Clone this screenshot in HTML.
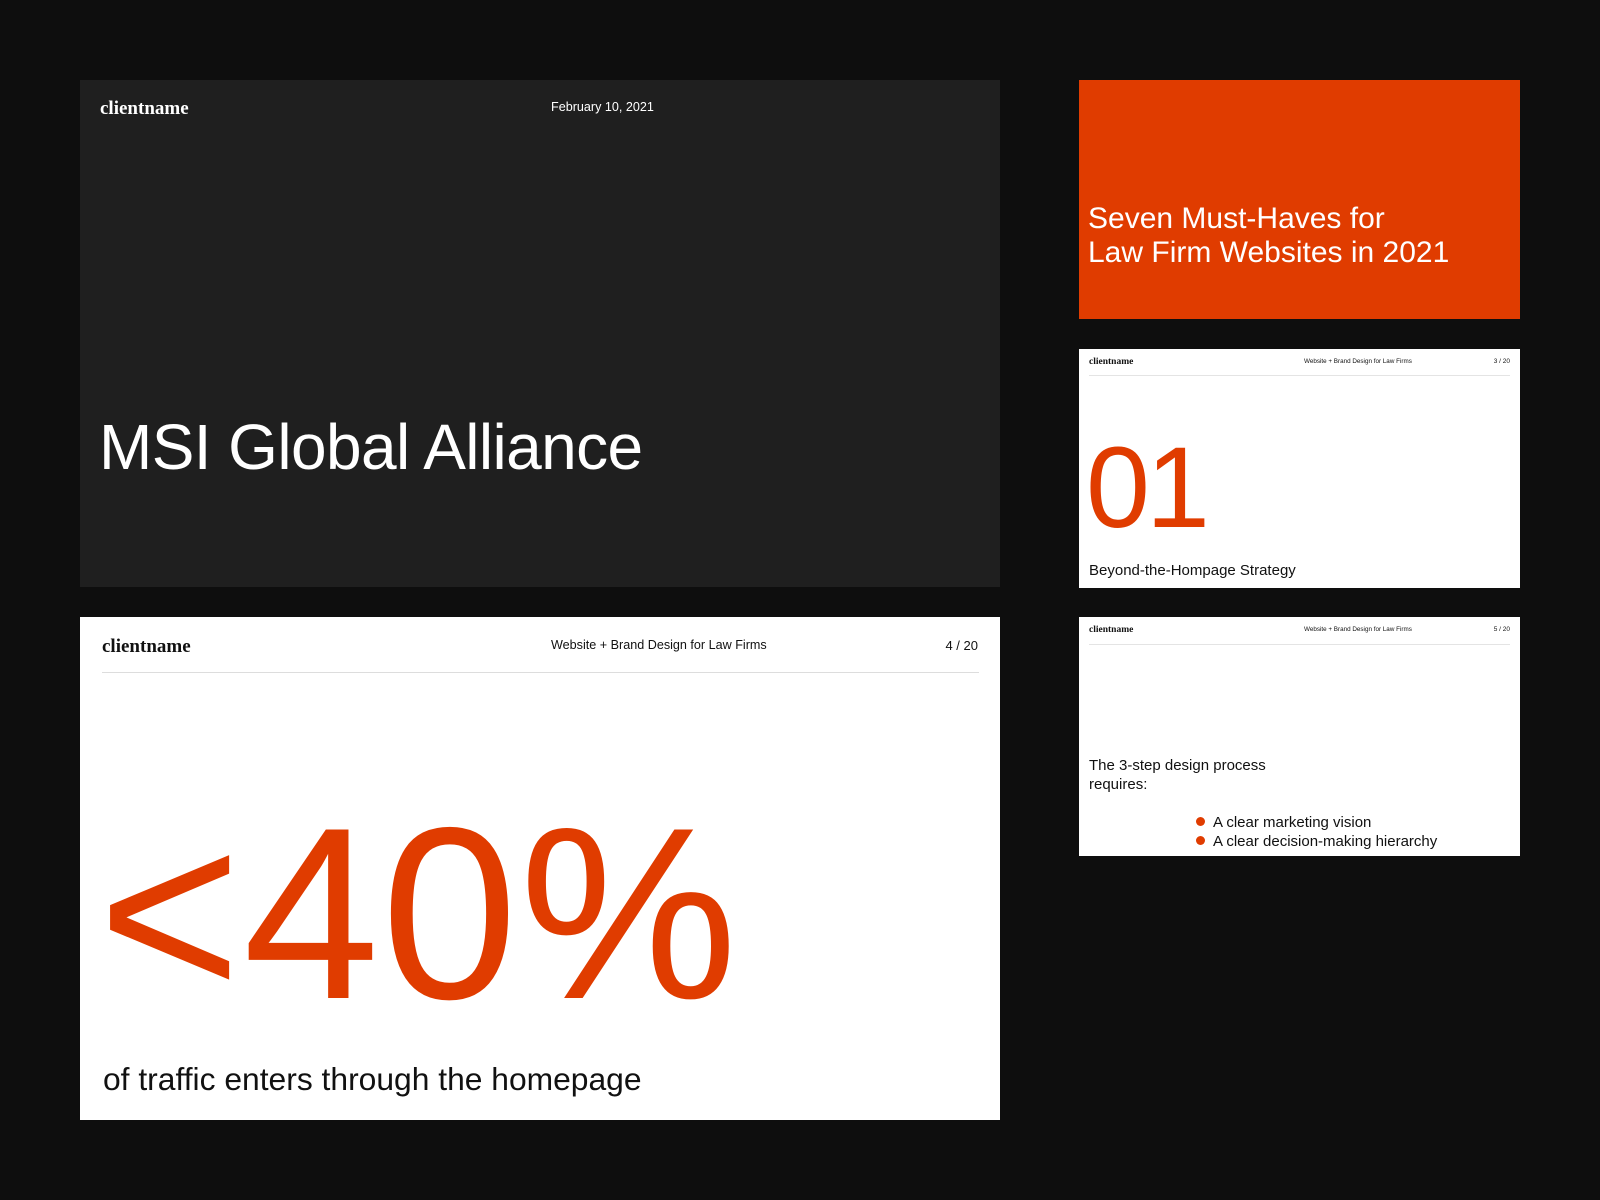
<!DOCTYPE html>
<html><head><meta charset="utf-8"><style>
*{margin:0;padding:0;box-sizing:border-box}
body{width:1600px;height:1200px;background:#0e0e0e;position:relative;overflow:hidden;font-family:"Liberation Sans",sans-serif}
.c{position:absolute}
.t{position:absolute;white-space:nowrap;line-height:1}
.logo{font-family:"Liberation Serif",serif;font-weight:bold;letter-spacing:0px}
.o{color:#e03c00}
</style></head><body>
<div class="c" style="left:80px;top:80px;width:920px;height:507px;background:#1f1f1f">
  <div class="t logo" style="left:20px;top:19px;font-size:19px;color:#fff">clientname</div>
  <div class="t" style="left:471px;top:21px;font-size:12.6px;color:#fff">February 10, 2021</div>
  <div class="t" style="left:19px;top:335px;font-size:64px;color:#fff;letter-spacing:-0.6px">MSI Global Alliance</div>
</div>
<div class="c" style="left:80px;top:617px;width:920px;height:503px;background:#fff">
  <div class="t logo" style="left:22px;top:20px;font-size:19px;color:#111">clientname</div>
  <div class="t" style="left:471px;top:22px;font-size:12.6px;color:#111">Website + Brand Design for Law Firms</div>
  <div class="t" style="right:22px;top:22px;font-size:13px;color:#111">4 / 20</div>
  <div class="c" style="left:22px;right:21px;top:55px;height:1px;background:#ddd"></div>
  <div class="t o" style="left:18px;top:174px;font-size:245px;letter-spacing:2px">&lt;40%</div>
  <div class="t" style="left:23px;top:447px;font-size:31.8px;color:#111;letter-spacing:0px">of traffic enters through the homepage</div>
</div>
<div class="c" style="left:1079px;top:80px;width:441px;height:239px;background:#e03c00">
  <div class="t" style="left:9px;top:122px;font-size:30px;color:#fff;line-height:34px">Seven Must-Haves for<br>Law Firm Websites in 2021</div>
</div>
<div class="c" style="left:1079px;top:349px;width:441px;height:239px;background:#fff">
  <div class="t logo" style="left:10px;top:9px;font-size:9.5px;color:#111">clientname</div>
  <div class="t" style="left:225px;top:10px;font-size:6.3px;color:#111">Website + Brand Design for Law Firms</div>
  <div class="t" style="right:10px;top:10px;font-size:6.5px;color:#111">3 / 20</div>
  <div class="c" style="left:10px;right:10px;top:26px;height:1px;background:#e4e4e4"></div>
  <div class="t o" style="left:7px;top:82px;font-size:115px;letter-spacing:-4px">01</div>
  <div class="t" style="left:10px;top:214px;font-size:15px;color:#111">Beyond-the-Hompage Strategy</div>
</div>
<div class="c" style="left:1079px;top:617px;width:441px;height:239px;background:#fff">
  <div class="t logo" style="left:10px;top:9px;font-size:9.5px;color:#111">clientname</div>
  <div class="t" style="left:225px;top:10px;font-size:6.3px;color:#111">Website + Brand Design for Law Firms</div>
  <div class="t" style="right:10px;top:10px;font-size:6.5px;color:#111">5 / 20</div>
  <div class="c" style="left:10px;right:10px;top:27px;height:1px;background:#e4e4e4"></div>
  <div class="t" style="left:10px;top:139px;font-size:15px;color:#111;line-height:19px">The 3-step design process<br>requires:</div>
  <div class="c" style="left:117px;top:200px;width:9px;height:9px;border-radius:50%;background:#e03c00"></div>
  <div class="c" style="left:117px;top:219px;width:9px;height:9px;border-radius:50%;background:#e03c00"></div>
  <div class="t" style="left:134px;top:196px;font-size:15px;color:#111;line-height:19px">A clear marketing vision<br>A clear decision-making hierarchy</div>
</div>
</body></html>
